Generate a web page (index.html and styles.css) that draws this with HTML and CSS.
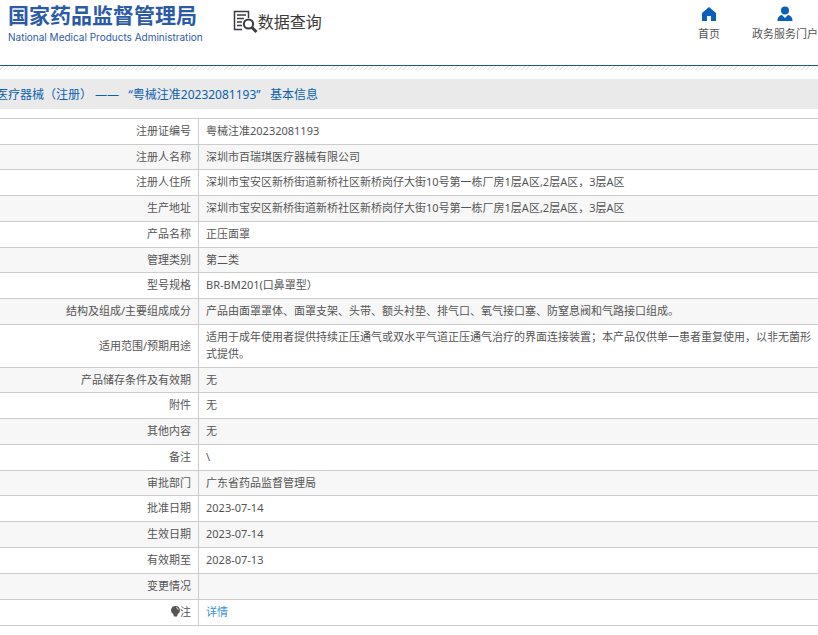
FILE: index.html
```html
<!DOCTYPE html>
<html lang="zh-CN">
<head>
    <meta charset="UTF-8">
    <meta name="viewport" content="width=device-width, initial-scale=1.0">
    <title>数据查询 - 国家药品监督管理局</title>
    <link rel="stylesheet" href="styles.css">
</head>
<body>
<header class="header">
    <div class="logo">
        <div class="logo-cn">国家药品监督管理局</div>
        <div class="logo-en">National Medical Products Administration</div>
    </div>
    <div class="search-title">
        <svg width="25" height="24" viewBox="0 0 25 24" fill="none" stroke="#3a3a42">
            <path d="M15.500 8V1.500H1.500v18H9" stroke-width="1.500"/>
            <path d="M4 5h9M4 8.500h7M4 12h5M4 15.500h5" stroke-width="1.300"/>
            <circle cx="15.500" cy="14" r="4.600" stroke-width="2"/>
            <path d="M19 17.500l4.500 4.500" stroke-width="3"/>
        </svg>
        <span>数据查询</span>
    </div>
    <nav class="nav">
        <a href="#">
            <svg width="16" height="16" viewBox="0 0 16 16" fill="#0b5fb8">
                <path d="M8 1L1 7v8h5v-5h4v5h5V7z"/>
            </svg>
            <span>首页</span>
        </a>
        <a href="#">
            <svg width="16" height="16" viewBox="0 0 16 16" fill="#0b5fb8">
                <circle cx="8" cy="4.500" r="4"/>
                <path d="M.5 15c0-4 2-5.500 4.500-6l3 3 3-3c2.500.5 4.500 2 4.500 6z"/>
            </svg>
            <span>政务服务门户</span>
        </a>
    </nav>
</header>
<div class="stripes"></div>
<main>
    <h1 class="page-title">医疗器械（注册） ——&nbsp;&nbsp; “粤械注准20232081193”&nbsp;&nbsp; 基本信息</h1>
    <table class="detail">
        <tr><th scope="row">注册证编号</th><td>粤械注准20232081193</td></tr>
        <tr><th scope="row">注册人名称</th><td>深圳市百瑞琪医疗器械有限公司</td></tr>
        <tr><th scope="row">注册人住所</th><td>深圳市宝安区新桥街道新桥社区新桥岗仔大街10号第一栋厂房1层A区,2层A区，3层A区</td></tr>
        <tr><th scope="row">生产地址</th><td>深圳市宝安区新桥街道新桥社区新桥岗仔大街10号第一栋厂房1层A区,2层A区，3层A区</td></tr>
        <tr><th scope="row">产品名称</th><td>正压面罩</td></tr>
        <tr><th scope="row">管理类别</th><td>第二类</td></tr>
        <tr><th scope="row">型号规格</th><td>BR-BM201(口鼻罩型）</td></tr>
        <tr><th scope="row">结构及组成/主要组成成分</th><td>产品由面罩罩体、面罩支架、头带、额头衬垫、排气口、氧气接口塞、防窒息阀和气路接口组成。</td></tr>
        <tr><th scope="row">适用范围/预期用途</th><td>适用于成年使用者提供持续正压通气或双水平气道正压通气治疗的界面连接装置；本产品仅供单一患者重复使用，以非无菌形式提供。</td></tr>
        <tr><th scope="row">产品储存条件及有效期</th><td>无</td></tr>
        <tr><th scope="row">附件</th><td>无</td></tr>
        <tr><th scope="row">其他内容</th><td>无</td></tr>
        <tr><th scope="row">备注</th><td>\</td></tr>
        <tr><th scope="row">审批部门</th><td>广东省药品监督管理局</td></tr>
        <tr><th scope="row">批准日期</th><td>2023-07-14</td></tr>
        <tr><th scope="row">生效日期</th><td>2023-07-14</td></tr>
        <tr><th scope="row">有效期至</th><td>2028-07-13</td></tr>
        <tr><th scope="row">变更情况</th><td></td></tr>
        <tr>
            <th scope="row">
                <svg class="bulb" width="9" height="11" viewBox="0 0 9 11">
                    <path d="M4.500 0a4.300 4.300 0 0 1 2.300 8L6 10.500H3L2.200 8A4.300 4.300 0 0 1 4.500 0z" fill="#555"/>
                    <path d="M5 1.500q2 .3 2.200 2.300" fill="none" stroke="#fff" stroke-width=".8"/>
                </svg>注</th>
            <td><a href="#">详情</a></td>
        </tr>
    </table>
</main>
</body>
</html>
```
FILE: styles.css
```css
* {
    box-sizing: border-box;
}
body {
    margin: 0;
    font-family: "Noto Sans", "Noto Sans CJK SC", sans-serif;
    font-size: 11px;
    line-height: 17px;
    color: #555;
    background: #fff;
    overflow-x: hidden;
}
a {
    text-decoration: none;
    color: #3c8fdc;
}
.header {
    display: flex;
    align-items: flex-start;
    height: 66px;
    padding-left: 8px;
    border-bottom: 1px solid #1b5c8e;
}
.logo {
    color: #2b5ba8;
    white-space: nowrap;
}
.logo-cn {
    font-size: 21px;
    font-weight: bold;
    line-height: 30px;
}
.logo-en {
    font-family: Inter, sans-serif;
    font-size: 10px;
    line-height: 14px;
}
.search-title {
    display: flex;
    align-items: center;
    margin-left: 30px;
    padding-top: 10px;
    font-size: 16px;
    line-height: 24px;
    color: #3a3a3a;
    white-space: nowrap;
}
.nav {
    display: flex;
    gap: 32px;
    margin-left: auto;
    padding-top: 6px;
}
.nav a {
    display: flex;
    flex-direction: column;
    align-items: center;
    gap: 3px;
    color: #555;
    white-space: nowrap;
}
.stripes {
    height: 4px;
    background: repeating-linear-gradient(135deg, #fff 0 2px, #e8e8e8 2px 3px);
}
.page-title {
    margin: 9px 0 9px -4px;
    padding-top: 2px;
    font-size: 12px;
    font-weight: normal;
    line-height: 28px;
    color: #0b5fb0;
    background: #eaeaea;
    white-space: nowrap;
}
.detail {
    width: 100%;
    border-collapse: separate;
    border-spacing: 0;
    border-top: 1px solid #ccc;
}
.detail th,
.detail td {
    height: 26px;
    padding: 3px 7px 5px;
    border-bottom: 1px solid #ccc;
    font-weight: normal;
    vertical-align: middle;
}
.detail th {
    width: 199px;
    border-right: 1px solid #ccc;
    text-align: right;
}
.detail td {
    text-align: left;
}
.detail tr:nth-child(even) {
    background: #f7f7f7;
}
.detail tr:nth-child(4n+2):not(:nth-last-child(2)) th,
.detail tr:nth-child(4n+2):not(:nth-last-child(2)) td {
    height: 25px;
    padding-bottom: 4px;
}
.bulb {
    vertical-align: -1px;
}
```
